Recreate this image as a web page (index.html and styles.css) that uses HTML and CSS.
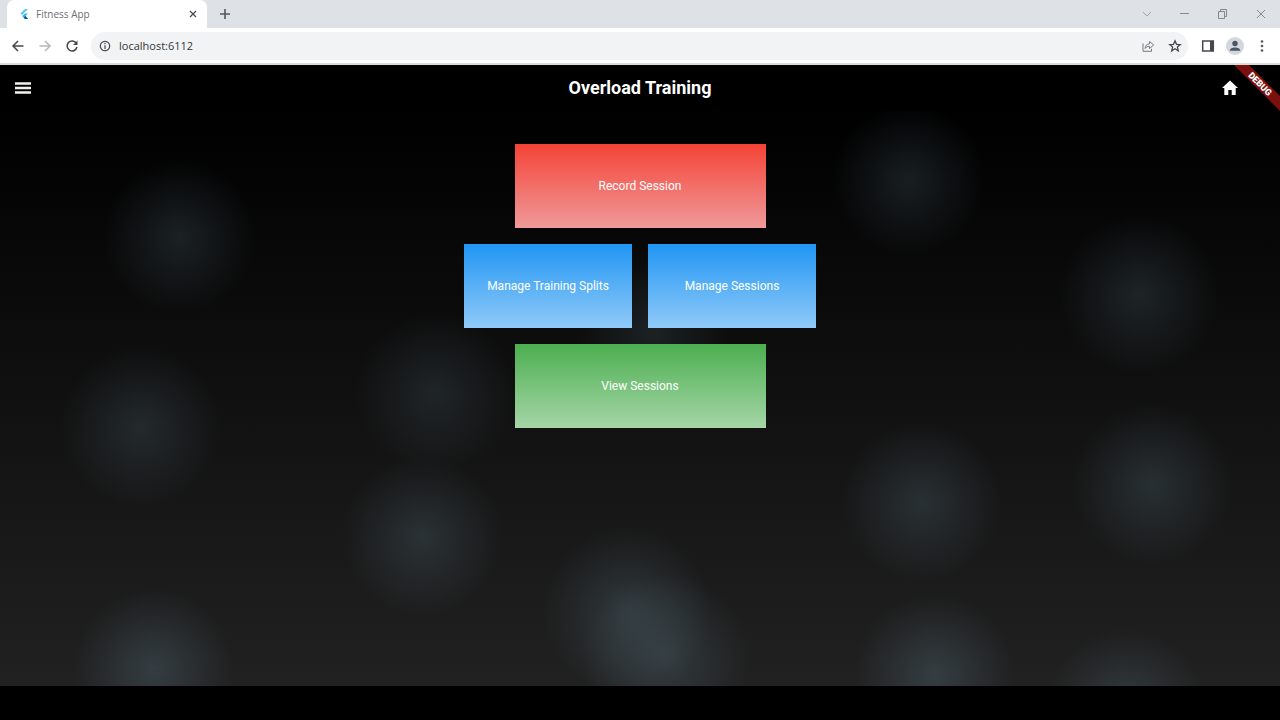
FILE: index.html
```html
<!DOCTYPE html>
<html lang="en">
<head>
<meta charset="utf-8">
<title>Fitness App</title>
<link rel="stylesheet" href="styles.css">
</head>
<body>
<div class="window">
  <div class="tabstrip">
    <div class="tab">
      <svg class="favicon" width="12" height="12" viewBox="0 0 12 12" aria-hidden="true"><path d="M7 1h3L4 7 2.500 5.500z" fill="#54c5f8"/><path d="M7 5.500h3L7.500 8l2.500 3H7L4 8z" fill="#40b6e8"/><path d="M5.700 9.500 7.300 8 10 11H7z" fill="#01579b"/></svg>
      <span class="tab-title">Fitness App</span>
      <button class="icon-button tab-close" aria-label="Close tab"><svg width="8" height="8" viewBox="0 0 8 8"><path d="m1 1 6 6M7 1 1 7" stroke="#45484c" stroke-width="1.200"/></svg></button>
    </div>
    <button class="icon-button new-tab" aria-label="New tab"><svg width="12" height="12" viewBox="0 0 12 12"><path d="M6 1v10M1 6h10" stroke="#55585c" stroke-width="1.600"/></svg></button>
    <div class="window-controls">
      <button class="icon-button" aria-label="Search tabs"><svg width="12" height="12" viewBox="0 0 12 12"><path d="m2 4 4 4 4-4" fill="none" stroke="#a0a3a8"/></svg></button>
      <button class="icon-button" aria-label="Minimize"><svg width="12" height="12" viewBox="0 0 12 12"><path d="M1 5.500h9" stroke="#85888c"/></svg></button>
      <button class="icon-button" aria-label="Restore"><svg width="12" height="12" viewBox="0 0 12 12"><path d="M1.500 3.500h6v7h-6zM3.500 3V1.500H9.500v7H8" fill="none" stroke="#85888c"/></svg></button>
      <button class="icon-button" aria-label="Close"><svg width="12" height="12" viewBox="0 0 12 12"><path d="m2 2 8 8m0-8-8 8" stroke="#85888c"/></svg></button>
    </div>
  </div>
  <div class="toolbar">
    <button class="icon-button" aria-label="Back"><svg width="14" height="14" viewBox="0 0 14 14"><path d="M12.500 7H2m5-5L2 7l5 5" fill="none" stroke="#45484c" stroke-width="1.500"/></svg></button>
    <button class="icon-button" aria-label="Forward" disabled><svg width="14" height="14" viewBox="0 0 14 14"><path d="M1.500 7H12M7 2l5 5-5 5" fill="none" stroke="#b5b7ba" stroke-width="1.500"/></svg></button>
    <button class="icon-button" aria-label="Reload"><svg width="14" height="14" viewBox="0 0 14 14"><path d="M11.500 4.500A5 5 0 1 0 12 8" fill="none" stroke="#45484c" stroke-width="1.500"/><path d="M12.500 1.500V6H8z" fill="#45484c"/></svg></button>
    <div class="omnibox">
      <svg width="12" height="12" viewBox="0 0 12 12" aria-hidden="true"><circle cx="6" cy="6" r="4.700" fill="none" stroke="#45484c" stroke-width="1.200"/><path d="M6 5.300V9M6 3v1.300" stroke="#45484c" stroke-width="1.200"/></svg>
      <input class="address" type="text" value="localhost:6112" aria-label="Address">
      <button class="icon-button" aria-label="Share"><svg width="14" height="14" viewBox="0 0 14 14"><path d="M2 4.500v7.800h8.500V9.800M4 9.500C4.300 6.500 6 5 8.500 4.800V2.500L12.700 6l-4.200 3.500V7.300C6.500 7.300 5.200 8 4 9.500z" fill="none" stroke="#777a7e"/></svg></button>
      <button class="icon-button" aria-label="Bookmark"><svg width="14" height="14" viewBox="0 0 14 14"><path d="m7 1.800 1.500 3.500 3.800.3-2.900 2.500.9 3.700L7 9.800l-3.300 2 .9-3.700-2.900-2.500 3.800-.3z" fill="none" stroke="#45484c" stroke-width="1.300"/></svg></button>
    </div>
    <div class="actions">
      <button class="icon-button" aria-label="Side panel"><svg width="14" height="14" viewBox="0 0 14 14"><path d="M1.700 2h10.600v10H1.700z" fill="none" stroke="#45484c" stroke-width="1.500"/><path d="M9 2h4v10H9z" fill="#45484c"/></svg></button>
      <button class="icon-button" aria-label="Profile"><svg width="18" height="18" viewBox="0 0 18 18"><circle cx="9" cy="9" r="9" fill="#d4d7dc"/><circle cx="9" cy="6.500" r="2.700" fill="#48566a"/><path d="M3.800 13.700c0-4.300 10.400-4.300 10.400 0z" fill="#48566a"/></svg></button>
      <button class="icon-button" aria-label="Browser menu"><svg width="14" height="14" viewBox="0 0 14 14"><g fill="#55585c"><circle cx="7" cy="2.500" r="1.300"/><circle cx="7" cy="7" r="1.300"/><circle cx="7" cy="11.500" r="1.300"/></g></svg></button>
    </div>
  </div>
  <div class="app">
    <header class="app-bar">
      <button class="icon-button" aria-label="Open menu"><svg width="16" height="16" viewBox="0 0 16 16"><path d="M0 3.500h16M0 8h16M0 12.500h16" stroke="#f2f2ee" stroke-width="2.400"/></svg></button>
      <h1 class="app-title">Overload Training</h1>
      <button class="icon-button" aria-label="Home"><svg width="16" height="16" viewBox="0 0 16 16"><path d="M8 .5 0 8h2.300v7h4V10h3.400v5h4V8H16z" fill="#fff"/></svg></button>
    </header>
    <svg class="debug-banner" width="46" height="46" viewBox="0 0 46 46"><path d="M0 0h15l31 31v15z" fill="#7c100d"/><text class="debug-text" text-anchor="middle" transform="translate(26 19) rotate(45)" y="3">DEBUG</text></svg>
    <main class="stage">
      <button class="tile tile-wide tile-record">Record Session</button>
      <div class="tile-row">
        <button class="tile tile-manage">Manage Training Splits</button>
        <button class="tile tile-manage">Manage Sessions</button>
      </div>
      <button class="tile tile-wide tile-view">View Sessions</button>
    </main>
  </div>
</div>
</body>
</html>
```
FILE: styles.css
```css
* { box-sizing: border-box; }

body {
  margin: 0;
  background: #000;
  font-family: "Open Sans", "Noto Sans", sans-serif;
}

.window {
  display: flex;
  flex-direction: column;
  min-height: 100vh;
  padding-bottom: 34px;
}

.icon-button {
  display: inline-flex;
  align-items: center;
  justify-content: center;
  padding: 0;
  border: 0;
  background: none;
}

.tabstrip {
  display: flex;
  align-items: center;
  height: 28px;
  padding-left: 7px;
  background: #dee1e6;
}

.tab {
  display: flex;
  align-items: center;
  gap: 6px;
  width: 200px;
  height: 28px;
  padding: 0 8px 0 11px;
  border-radius: 7px 7px 0 0;
  background: #fff;
}

.tab-title {
  flex: 1;
  font-size: 10px;
  color: #6c6f73;
}

.tab-close { width: 12px; height: 12px; }

.new-tab {
  width: 24px;
  height: 24px;
  margin-left: 6px;
}

.window-controls {
  display: flex;
  gap: 26px;
  margin-left: auto;
  padding-right: 13px;
}

.toolbar {
  display: flex;
  align-items: center;
  gap: 13px;
  height: 37px;
  padding: 0 11px;
  border-bottom: 2px solid #dadce0;
  background: #fff;
}

.omnibox {
  display: flex;
  flex: 1;
  align-items: center;
  gap: 13px;
  height: 28px;
  margin-left: -1px;
  padding: 0 6px 0 8px;
  border-radius: 14px;
  background: #f1f3f4;
}

.address {
  flex: 1;
  min-width: 0;
  margin-left: -5px;
  padding: 0;
  border: 0;
  background: none;
  font: 11px "Open Sans", "Noto Sans", sans-serif;
  color: #34373b;
}

.actions {
  display: flex;
  align-items: center;
  gap: 11px;
}

.app {
  position: relative;
  display: flex;
  flex: 1;
  flex-direction: column;
  font-family: Roboto, sans-serif;
}

.app-bar {
  display: flex;
  align-items: center;
  height: 45px;
  padding: 0 42px 0 15px;
  background: #000;
}

.app-title {
  flex: 1;
  margin: 0;
  padding-left: 27px;
  text-align: center;
  font-size: 18px;
  font-weight: 700;
  color: #fff;
}

.debug-banner {
  position: absolute;
  top: 0;
  right: 0;
}

.debug-text {
  font-size: 9px;
  font-weight: 900;
  fill: #fff;
}

/* Soft glowing orbs over a dark vertical gradient */
.stage {
  display: flex;
  flex: 1;
  flex-direction: column;
  align-items: center;
  gap: 16px;
  padding-top: 34px;
  background:
    radial-gradient(circle 76px at 14% 22%, #607d8b38, #607d8b00),
    radial-gradient(circle 76px at 71% 12%, #607d8b38, #607d8b00),
    radial-gradient(circle 80px at 89% 32%, #607d8b38, #607d8b00),
    radial-gradient(circle 80px at 11% 55%, #607d8b38, #607d8b00),
    radial-gradient(circle 80px at 34% 49%, #607d8b30, #607d8b00),
    radial-gradient(circle 80px at 33% 74%, #607d8b40, #607d8b00),
    radial-gradient(circle 80px at 72% 68%, #607d8b40, #607d8b00),
    radial-gradient(circle 80px at 90% 65%, #607d8b40, #607d8b00),
    radial-gradient(circle 80px at 12% 97%, #607d8b50, #607d8b00),
    radial-gradient(circle 80px at 73% 98%, #607d8b50, #607d8b00),
    radial-gradient(circle 80px at 88% 104%, #607d8b48, #607d8b00),
    radial-gradient(circle 84px at 49% 87%, #607d8b48, #607d8b00),
    radial-gradient(circle 84px at 52% 95%, #607d8b48, #607d8b00),
    radial-gradient(circle 76px at 51% 38%, #607d8b30, #607d8b00),
    linear-gradient(#000, #212121);
}

.tile-row {
  display: flex;
  gap: 16px;
}

.tile {
  width: 168px;
  height: 84px;
  padding: 0;
  border: 0;
  font: 400 12px Roboto, sans-serif;
  color: #fff;
}

.tile-wide { width: 251px; }

.tile-record { background: linear-gradient(#f44336, #ef9a9a); }

.tile-manage { background: linear-gradient(#2196f3, #90caf9); }

.tile-view { background: linear-gradient(#4caf50, #a5d6a7); }
```
